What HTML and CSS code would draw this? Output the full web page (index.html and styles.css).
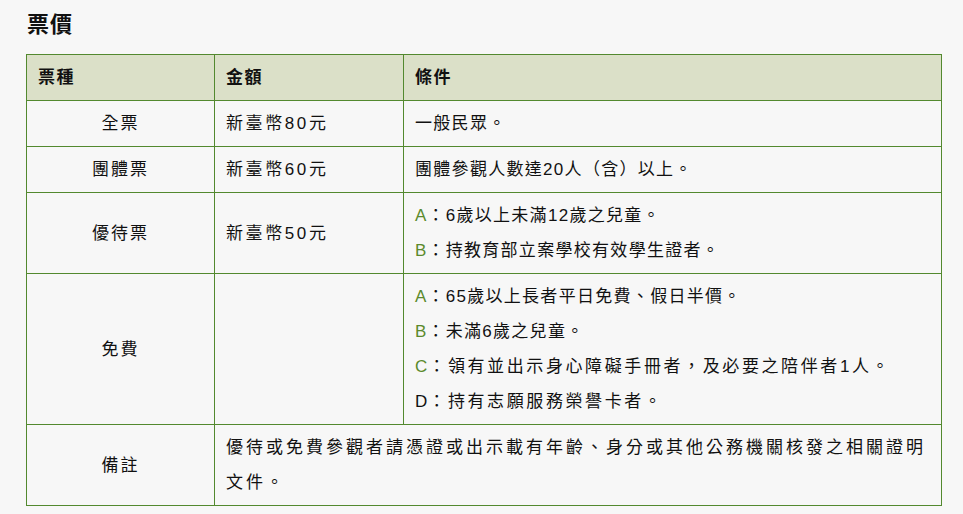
FILE: index.html
```html
<!DOCTYPE html>
<html lang="zh-Hant">
<head>
<meta charset="utf-8">
<title>票價</title>
<link rel="stylesheet" href="styles.css">
</head>
<body>
<section class="page">
  <h2 class="title">票價</h2>
  <table class="prices">
    <colgroup>
      <col class="c1">
      <col class="c2">
      <col class="c3">
    </colgroup>
    <thead>
      <tr>
        <th class="h-type">票種</th>
        <th class="h-amount">金額</th>
        <th class="h-cond">條件</th>
      </tr>
    </thead>
    <tbody>
      <tr>
        <td class="type">全票</td>
        <td class="amount">新臺幣80元</td>
        <td class="cond">一般民眾。</td>
      </tr>
      <tr>
        <td class="type">團體票</td>
        <td class="amount">新臺幣60元</td>
        <td class="cond">團體參觀人數達20人（含）以上。</td>
      </tr>
      <tr>
        <td class="type">優待票</td>
        <td class="amount">新臺幣50元</td>
        <td class="cond">
          <div class="line"><span class="key">A</span>：6歲以上未滿12歲之兒童。</div>
          <div class="line"><span class="key">B</span>：持教育部立案學校有效學生證者。</div>
        </td>
      </tr>
      <tr>
        <td class="type">免費</td>
        <td class="amount"></td>
        <td class="cond">
          <div class="line"><span class="key">A</span>：65歲以上長者平日免費、假日半價。</div>
          <div class="line"><span class="key">B</span>：未滿6歲之兒童。</div>
          <div class="line wide"><span class="key">C</span>：領有並出示身心障礙手冊者，及必要之陪伴者1人。</div>
          <div class="line wide"><span class="key dark">D</span>：持有志願服務榮譽卡者。</div>
        </td>
      </tr>
      <tr>
        <td class="type">備註</td>
        <td class="note" colspan="2">優待或免費參觀者請憑證或出示載有年齡、身分或其他公務機關核發之相關證明文件。</td>
      </tr>
    </tbody>
  </table>
</section>
</body>
</html>
```

FILE: styles.css
```css
html, body {
  margin: 0;
  padding: 0;
  background: #f7f7f7;
}

body {
  font-family: "Liberation Sans", "Noto Sans CJK TC", sans-serif;
  color: #111;
  text-spacing-trim: space-all;
}

.page {
  padding: 10px 0 0 26px;
}

.title {
  margin: 0 0 14px 1px;
  font-size: 22px;
  line-height: 30px;
  font-weight: bold;
  letter-spacing: 1px;
  color: #111;
}

.prices {
  border-collapse: collapse;
  width: 916px;
  table-layout: fixed;
  font-size: 17px;
}

.c1 { width: 188px; }
.c2 { width: 189px; }

.prices th,
.prices td {
  border: 1px solid #53892f;
  padding: 5px 11px;
  line-height: 35px;
  vertical-align: middle;
}

.prices th {
  background: #dbe0c8;
  text-align: left;
  font-weight: bold;
  letter-spacing: 1.5px;
}

.prices td.type {
  text-align: center;
  letter-spacing: 2px;
}

.prices td.amount {
  letter-spacing: 2.6px;
}

.prices td.cond {
  letter-spacing: 1.3px;
}

.prices td.cond .line.wide {
  letter-spacing: 2.6px;
}

.prices td.note {
  letter-spacing: 3px;
}

.key {
  color: #5b8a2c;
  letter-spacing: 1px;
}

.key.dark {
  color: #111;
}
```
